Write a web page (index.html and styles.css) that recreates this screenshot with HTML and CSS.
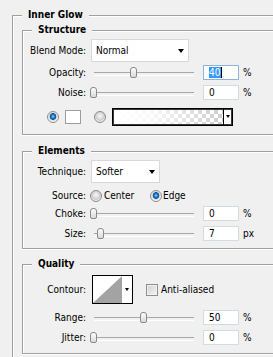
FILE: index.html
```html
<!DOCTYPE html>
<html>
<head>
<meta charset="utf-8">
<link rel="stylesheet" href="styles.css">
</head>
<body>
<div class="group outer">
  <div class="gtitle">Inner Glow</div>

  <div class="group inner structure">
    <div class="gtitle">Structure</div>
    <div class="row r-blend">
      <span class="label">Blend Mode:</span>
      <div class="select sel-blend"><span>Normal</span><i class="arrow"></i></div>
    </div>
    <div class="row r-opacity">
      <span class="label">Opacity:</span>
      <div class="slider"><span class="thumb" style="left:40px"></span></div>
      <div class="field focus"><span class="selected">40</span><span class="caret"></span></div>
      <span class="unit">%</span>
    </div>
    <div class="row r-noise">
      <span class="label">Noise:</span>
      <div class="slider"><span class="thumb" style="left:0px"></span></div>
      <div class="field">0</div>
      <span class="unit">%</span>
    </div>
    <div class="row r-color">
      <span class="radio on"></span>
      <span class="swatch"></span>
      <span class="radio off r2"></span>
      <div class="gradient"><span class="grad-fill"></span><span class="grad-btn"><i class="arrow small"></i></span></div>
    </div>
  </div>

  <div class="group inner elements">
    <div class="gtitle">Elements</div>
    <div class="row r-tech">
      <span class="label">Technique:</span>
      <div class="select sel-tech"><span>Softer</span><i class="arrow"></i></div>
    </div>
    <div class="row r-source">
      <span class="label">Source:</span>
      <span class="opt opt-center"><span class="radio off"></span><span class="opt-text">Center</span></span>
      <span class="opt opt-edge"><span class="radio on"></span><span class="opt-text">Edge</span></span>
    </div>
    <div class="row r-choke">
      <span class="label">Choke:</span>
      <div class="slider"><span class="thumb" style="left:0px"></span></div>
      <div class="field">0</div>
      <span class="unit">%</span>
    </div>
    <div class="row r-size">
      <span class="label">Size:</span>
      <div class="slider"><span class="thumb" style="left:7px"></span></div>
      <div class="field">7</div>
      <span class="unit">px</span>
    </div>
  </div>

  <div class="group inner quality">
    <div class="gtitle">Quality</div>
    <div class="row r-contour">
      <span class="label">Contour:</span>
      <div class="contour">
        <svg class="contour-graph" width="29" height="27" viewBox="0 0 29 27"><polygon points="0,27 29,0 29,27" fill="#a3a3a3"/></svg>
        <span class="contour-btn"><i class="arrow small"></i></span>
      </div>
      <span class="checkbox"></span>
      <span class="check-text">Anti-aliased</span>
    </div>
    <div class="row r-range">
      <span class="label">Range:</span>
      <div class="slider"><span class="thumb" style="left:50px"></span></div>
      <div class="field">50</div>
      <span class="unit">%</span>
    </div>
    <div class="row r-jitter">
      <span class="label">Jitter:</span>
      <div class="slider"><span class="thumb" style="left:0px"></span></div>
      <div class="field">0</div>
      <span class="unit">%</span>
    </div>
  </div>
</div>
</body>
</html>
```
FILE: styles.css
```css
* { box-sizing: border-box; }
html, body { margin: 0; padding: 0; }
body {
  background: #f0f0f0;
  width: 273px;
  height: 357px;
  overflow: hidden;
  font-family: "DejaVu Sans Condensed", "DejaVu Sans", sans-serif;
  font-stretch: condensed;
  font-size: 10px;
  color: #000;
}

.group {
  display: flex;
  flex-direction: column;
  border-left: 1px solid #a0a0a0;
  border-top: 1px solid #a0a0a0;
  box-shadow: inset 1px 1px 0 #fff;
}
.outer {
  margin: 15px 0 0 12px;
  width: 261px;
  height: 342px;
}
.inner {
  flex: none;
  margin-left: 9px;
  border-bottom: 1px solid #a0a0a0;
  box-shadow: inset 1px 1px 0 #fff, 0 1px 0 #fff;
}
.structure { margin-top: 8px; padding-bottom: 8px; }
.elements { margin-top: 16px; padding-bottom: 7px; }
.quality { margin-top: 15px; padding-bottom: 8px; }

.gtitle {
  flex: none;
  align-self: flex-start;
  font-weight: bold;
  height: 14px;
  line-height: 14px;
  margin: -8px 0 0 9px;
  padding: 0 6px;
  background: #f0f0f0;
}

.row { display: flex; align-items: center; height: 15px; flex: none; }
.label { flex: none; width: 63px; text-align: right; white-space: nowrap; }

.r-blend { margin-top: 2px; height: 23px; }
.r-opacity { margin-top: 3px; }
.r-noise { margin-top: 5px; }
.r-color { margin-top: 8px; height: 18px; padding-left: 24px; }
.r-tech { margin-top: 2px; height: 23px; }
.r-source { margin-top: 5px; }
.r-choke { margin-top: 3px; }
.r-size { margin-top: 5px; }
.r-contour { margin-top: 4px; height: 29px; }
.r-range { margin-top: 6px; }
.r-jitter { margin-top: 5px; }

/* dropdowns */
.select {
  flex: none;
  margin-left: 5px;
  height: 23px;
  background: #fff;
  border: 1px solid #d8d8d8;
  display: flex;
  align-items: center;
  padding-left: 4px;
}
.sel-blend { width: 98px; }
.sel-tech { width: 69px; }
.arrow {
  display: block;
  margin-left: auto;
  margin-right: 4px;
  width: 0;
  height: 0;
  border-left: 3.5px solid transparent;
  border-right: 3.5px solid transparent;
  border-top: 4px solid #000;
}
.arrow.small {
  margin: 0;
  border-left-width: 2.5px;
  border-right-width: 2.5px;
  border-top-width: 3px;
}

/* sliders */
.slider {
  flex: none;
  position: relative;
  margin-left: 4px;
  width: 107px;
  height: 15px;
}
.slider::before {
  content: "";
  position: absolute;
  left: 4px;
  width: 100px;
  top: 7px;
  height: 2px;
  border-top: 1px solid #a8a8a8;
  border-bottom: 1px solid #fff;
}
.thumb {
  position: absolute;
  top: 2px;
  width: 7px;
  height: 11px;
  border: 1px solid #8a8a8a;
  border-radius: 3px 3px 2px 2px;
  background: linear-gradient(#fdfdfd, #d9d9d9);
}

/* number fields */
.field {
  flex: none;
  margin-left: 6px;
  width: 36px;
  height: 15px;
  background: #fff;
  border: 1px solid #d5dbe2;
  padding-left: 5px;
  display: flex;
  align-items: center;
}
.field.focus { border-color: #8fb3db; }
.selected {
  background: #3399ff;
  color: #fff;
  line-height: 11px;
  padding: 0 1px 0 0;
}
.caret {
  width: 1px;
  height: 11px;
  background: #000;
}
.unit { margin-left: 4px; }

/* radios */
.radio {
  flex: none;
  width: 12px;
  height: 12px;
  border-radius: 50%;
  border: 1px solid #8c8c8c;
}
.radio.on {
  background: radial-gradient(circle at 50% 45%, #8fd0f5 0, #2a86d0 1.5px, #0e4d8f 3px, #cfd6dc 3.6px, #f6f6f6 5px);
}
.radio.off {
  background: radial-gradient(circle at 50% 40%, #f8f8f8 0, #dcdcdc 3px, #c9c9c9 4.5px, #ececec 5px);
}
.swatch {
  flex: none;
  margin-left: 6px;
  width: 16px;
  height: 14px;
  background: #fff;
  border: 1px solid #9c9c9c;
}
.r2 { margin-left: 13px; }
.gradient {
  flex: none;
  margin-left: 6px;
  width: 121px;
  height: 18px;
  border: 1px solid #000;
  box-shadow: inset 0 0 0 1px #3a3a3a;
  display: flex;
  background: #fff;
}
.grad-fill {
  width: 109px;
  margin: 1px 0 1px 1px;
  background:
    linear-gradient(to right, #fff 0%, rgba(255,255,255,0.85) 35%, rgba(255,255,255,0) 100%),
    repeating-conic-gradient(#cdcdcd 0 25%, #fff 0 50%) 0 0 / 8px 8px;
}
.grad-btn {
  flex: 1;
  border-left: 1px solid #000;
  display: flex;
  align-items: center;
  justify-content: center;
  padding-bottom: 1px;
}

/* source options */
.opt { display: flex; align-items: center; flex: none; }
.opt-center { margin-left: 4px; width: 60px; }
.opt-text { margin-left: 2px; }
.opt-edge .opt-text { margin-left: 1px; }

/* contour */
.contour {
  flex: none;
  margin-left: 6px;
  width: 41px;
  height: 29px;
  border: 1px solid #000;
  background: #fff;
  display: flex;
}
.contour-graph { display: block; flex: none; }
.contour-btn {
  flex: 1;
  display: flex;
  justify-content: center;
  padding-top: 12px;
}
.checkbox {
  flex: none;
  margin-left: 13px;
  width: 12px;
  height: 12px;
  border: 1px solid #8e8e8e;
  background: linear-gradient(135deg, #cfcfcf, #f6f6f6);
  box-shadow: inset 0 0 0 1px #f2f2f2;
}
.check-text { margin-left: 3px; }
```
